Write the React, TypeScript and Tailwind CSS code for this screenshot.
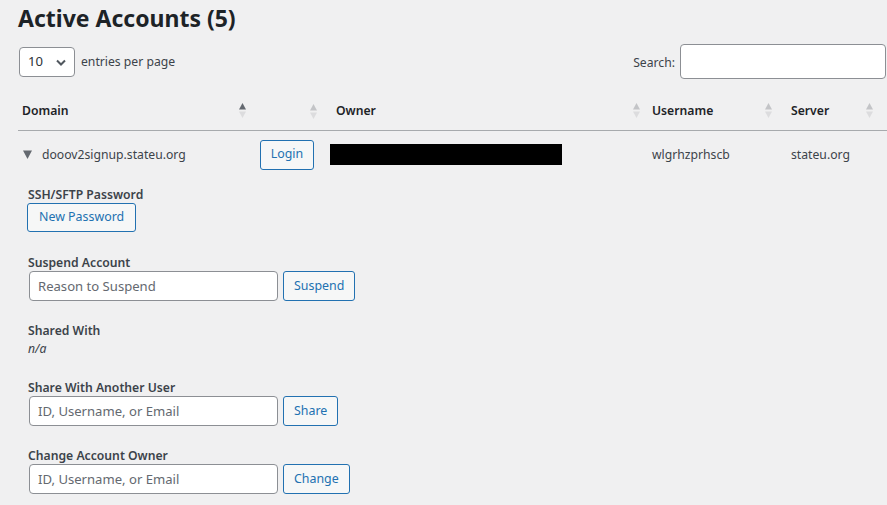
import React from 'react';

const Sort = ({ active = false }: { active?: boolean }) => (
  <svg width="7" height="15" viewBox="0 0 7 15" className="shrink-0">
    <path d="M3.5 0L7 6.5H0Z" fill={active ? '#646970' : '#c3c4c7'} />
    <path d="M3.5 15L7 8.5H0Z" fill="#dcdcde" />
  </svg>
);

const Label = ({ children }: { children: React.ReactNode }) => (
  <span className="font-semibold text-[12.2px] leading-[17px] pt-px text-[#3c434a]">{children}</span>
);

const Field = ({ label, placeholder, action }: { label: string; placeholder: string; action: string }) => (
  <div className="flex flex-col">
    <Label>{label}</Label>
    <div className="flex items-center gap-[5px] pl-px">
      <input
        placeholder={placeholder}
        className="w-[249px] h-[30px] bg-white border border-[#8c8f94] rounded-[4px] px-[8px] text-[13.1px] text-[#2c3338] placeholder:text-[#646970] outline-none"
      />
      <button className="h-[30px] px-[10px] border border-[#2271b1] rounded-[3px] bg-[#f6f7f7] text-[#2271b1] text-[12.4px]">
        {action}
      </button>
    </div>
  </div>
);

export default function App() {
  return (
    <div className="min-h-screen bg-[#f0f0f1] text-[#3c434a] font-['Noto_Sans',sans-serif] overflow-hidden">
      <h1 className="pl-[18px] pt-[3px] text-[23px] leading-[30px] font-bold text-[#1d2327]">Active Accounts (5)</h1>

      {/* controls */}
      <div className="flex items-center justify-between pl-[19px] pr-px mt-[11px]">
        <div className="flex items-center gap-[6px] pt-px">
          <div className="w-[56px] h-[30px] bg-white border border-[#8c8f94] rounded-[4px] flex items-center justify-between pl-[8px] pr-[8px] text-[13.1px] text-[#2c3338]">
            <span>10</span>
            <svg width="10" height="7" viewBox="0 0 10 7">
              <path d="M1 1.5L5 5.5L9 1.5" stroke="#50575e" strokeWidth="2" fill="none" />
            </svg>
          </div>
          <span className="text-[12.2px]">entries per page</span>
        </div>
        <div className="flex items-center gap-[5px]">
          <span className="text-[12.2px] pt-[3px]">Search:</span>
          <input className="w-[206px] h-[35px] bg-white border border-[#8c8f94] rounded-[4px] outline-none" />
        </div>
      </div>

      {/* table */}
      <div className="ml-[18px] mt-[11px]">
        <div className="grid grid-cols-[238px_76px_316px_139px_100px] h-[41px] pt-[2px] border-b border-[#a7aaad] items-center text-[12.2px] font-semibold text-[#1d2327]">
          <div className="flex items-center justify-between pl-[4px] pr-[10px]"><span>Domain</span><Sort active /></div>
          <div className="flex items-center justify-end pr-[15px]"><Sort /></div>
          <div className="flex items-center justify-between pl-[4px] pr-[8px]"><span>Owner</span><Sort /></div>
          <div className="flex items-center justify-between pl-[4px] pr-[15px]"><span>Username</span><Sort /></div>
          <div className="flex items-center justify-between pl-[4px] pr-[14px]"><span>Server</span><Sort /></div>
        </div>
        <div className="grid grid-cols-[238px_76px_316px_139px_100px] h-[47px] items-center text-[12.2px] text-[#3c434a]">
          <div className="flex items-center pl-[5px] gap-[10px] pt-px">
            <svg width="9" height="9" viewBox="0 0 9 9">
              <path d="M0 0.5H9L4.5 9Z" fill="#646970" />
            </svg>
            <span>dooov2signup.stateu.org</span>
          </div>
          <div className="pl-[4px]">
            <button className="h-[30px] w-[54px] border border-[#2271b1] rounded-[3px] bg-[#f6f7f7] text-[#2271b1] text-[12.4px]">Login</button>
          </div>
          <div className="-ml-[2px]">
            <div className="w-[232px] h-[21px] bg-black" />
          </div>
          <div className="pl-[4px] pt-px">wlgrhzprhscb</div>
          <div className="pl-[4px] pt-px">stateu.org</div>
        </div>
      </div>

      {/* details */}
      <div className="pl-[28px] pt-[7px] flex flex-col gap-[20px]">
        <div className="flex flex-col mb-px">
          <Label>SSH/SFTP Password</Label>
          <div>
            <button className="h-[29px] px-[11px] -ml-px border border-[#2271b1] rounded-[3px] bg-[#f6f7f7] text-[#2271b1] text-[12.4px]">New Password</button>
          </div>
        </div>
        <Field label="Suspend Account" placeholder="Reason to Suspend" action="Suspend" />
        <div className="flex flex-col">
          <Label>Shared With</Label>
          <span className="italic text-[12.2px] leading-[19px]">n/a</span>
        </div>
        <Field label="Share With Another User" placeholder="ID, Username, or Email" action="Share" />
        <Field label="Change Account Owner" placeholder="ID, Username, or Email" action="Change" />
      </div>
    </div>
  );
}
